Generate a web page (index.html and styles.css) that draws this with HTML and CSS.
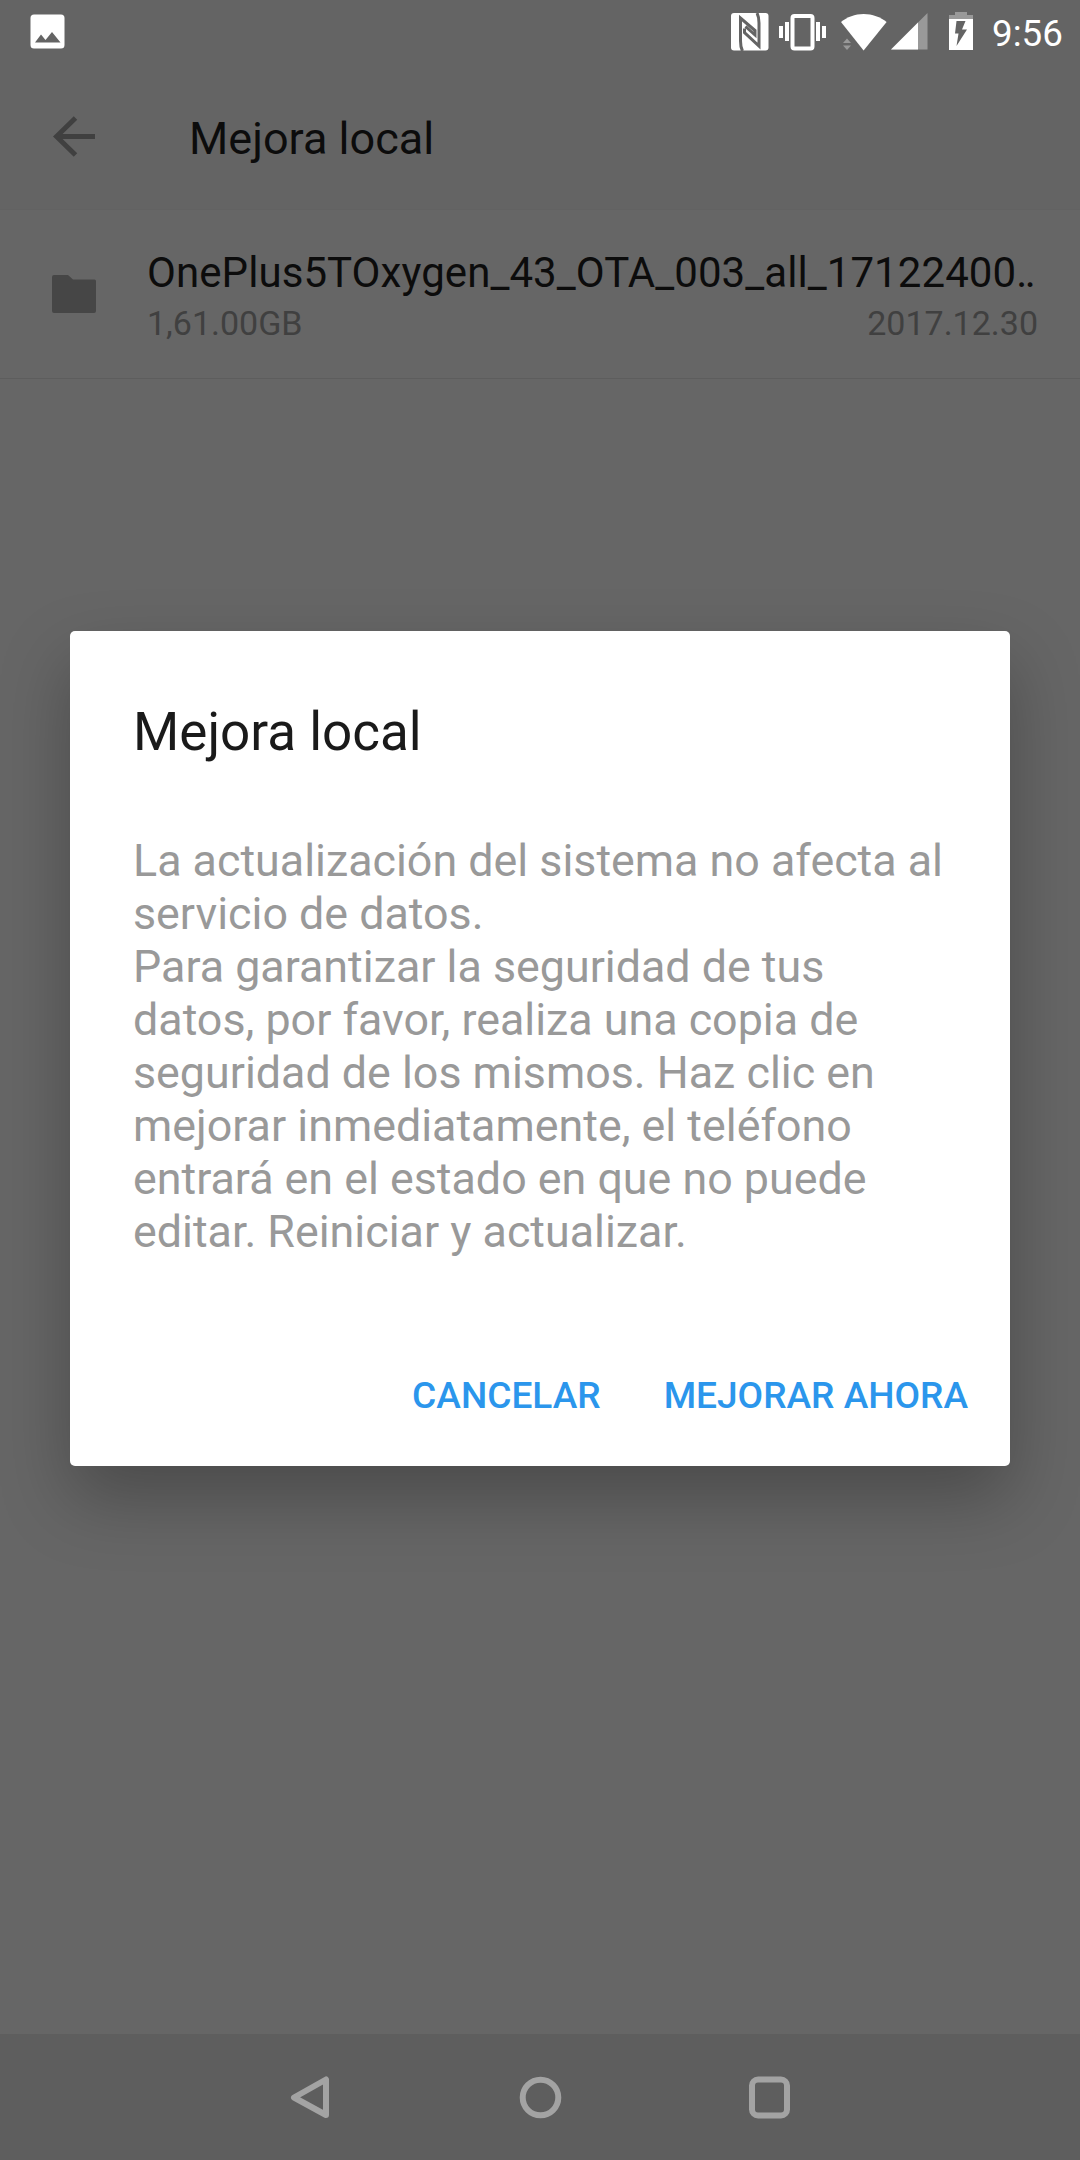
FILE: index.html
```html
<!DOCTYPE html>
<html lang="es">
<head>
    <meta charset="UTF-8">
    <meta name="viewport" content="width=device-width, initial-scale=1.0">
    <title>Mejora local</title>
    <link rel="stylesheet" href="styles.css">
</head>
<body>
    <div class="screen">
        <div class="status-bar">
            <svg class="icon-picture" width="36" height="36" viewBox="0 0 36 36">
                <path fill="#fff" fill-rule="evenodd" d="M4 .5h27A3.500 3.500 0 0 1 34.500 4v27a3.500 3.500 0 0 1-3.500 3.500H4A3.500 3.500 0 0 1 .5 31V4A3.500 3.500 0 0 1 4 .5zM5 28.500h25.500L22 18l-6.500 8-4.500-5.500z"/>
            </svg>
            <div class="status-icons">
                <svg class="icon-nfc" width="38" height="38" viewBox="0 0 38 38">
                    <rect width="37.500" height="37.500" rx="3" fill="#fff"/>
                    <path fill="none" stroke="#646464" stroke-width="3" d="M11.500 38c-1.600-3-2-6-2-10V5L24 17.500v4.500L14.500 13.500M26 0c1.600 3 2 6 2 10v23L13.500 19.500v-4"/>
                </svg>
                <svg class="icon-vibrate" width="48" height="37" viewBox="0 0 48 37">
                    <rect x="13.500" y="2" width="20" height="32.500" rx="2" fill="none" stroke="#fff" stroke-width="4"/>
                    <path fill="#fff" d="M0 12h4v12H0zM6 8h4v19H6zM37 8h4v19h-4zM43 12h4v12h-4z"/>
                </svg>
                <svg class="icon-wifi" width="46" height="37" viewBox="0 0 46 37">
                    <path fill="#fff" d="M22.600 36.500L0 8C6 3 14 0 22.600 0s17 3 23 8z"/>
                    <path fill="#999" d="M2 29l4-4.500 4 4.500zM2 31.500h8L6 36z"/>
                </svg>
                <svg class="icon-signal" width="37" height="37" viewBox="0 0 37 37">
                    <path fill="#999" d="M36.500 0v36.500H0z"/>
                    <path fill="#fff" d="M27 9.500v27H0z"/>
                </svg>
                <svg class="icon-battery" width="24" height="38" viewBox="0 0 24 38">
                    <path fill="#999" d="M0 3h6V0h12v3h6v4H0z"/>
                    <path fill="#fff" d="M0 7h24v31H0z"/>
                    <path fill="#646464" d="M7.500 9h9L13 17.500h5L7.500 34l2-12.500H6z"/>
                </svg>
                <span class="clock">9:56</span>
            </div>
        </div>

        <div class="toolbar">
            <svg class="icon-back" width="42" height="42" viewBox="0 0 42 42">
                <path fill="none" stroke="#404040" stroke-width="5" d="M42 20.500H3M22.500 2L3.500 20.500 22.500 39"/>
            </svg>
            <h1>Mejora local</h1>
        </div>

        <div class="file-row">
            <svg class="icon-folder" width="44" height="38" viewBox="0 0 44 38">
                <path fill="#464646" d="M2 0h14l5 4.500h21.500a1.500 1.500 0 0 1 1.500 1.500v30a2 2 0 0 1-2 2H2a2 2 0 0 1-2-2V2a2 2 0 0 1 2-2z"/>
            </svg>
            <div class="file-info">
                <div class="file-name">OnePlus5TOxygen_43_OTA_003_all_17122400<span class="dots">..</span></div>
                <div class="file-meta">
                    <span>1,61.00GB</span>
                    <span>2017.12.30</span>
                </div>
            </div>
        </div>

        <div class="nav-bar">
            <svg width="44" height="44" viewBox="0 0 44 44">
                <path fill="none" stroke="#a3a3a3" stroke-width="6" stroke-linejoin="round" d="M38 4.500V40L6 22.500z"/>
            </svg>
            <svg width="44" height="44" viewBox="0 0 44 44">
                <circle cx="22.500" cy="22.500" r="17.800" fill="none" stroke="#a3a3a3" stroke-width="6"/>
            </svg>
            <svg width="44" height="44" viewBox="0 0 44 44">
                <rect x="4" y="4.500" width="35" height="36" rx="6" fill="none" stroke="#a3a3a3" stroke-width="6"/>
            </svg>
        </div>
    </div>

    <div class="dialog">
        <h2>Mejora local</h2>
        <p>La actualización del sistema no afecta al servicio de datos.<br>Para garantizar la seguridad de tus datos, por favor, realiza una copia de seguridad de los mismos. Haz clic en mejorar inmediatamente, el teléfono entrará en el estado en que no puede editar. Reiniciar y actualizar.</p>
        <div class="dialog-actions">
            <button>CANCELAR</button>
            <button>MEJORAR AHORA</button>
        </div>
    </div>
</body>
</html>
```
FILE: styles.css
```css
* { margin: 0; padding: 0; box-sizing: border-box; }
:root {
    --bg: #666666; --bar: #646464; --nav: #5e5e5e;
    --text: #0c0c0c; --text-secondary: #404040;
    --accent: #2b96ec;
}
body { width: 1080px; height: 2160px; position: relative; overflow: hidden; font-family: Roboto, sans-serif; }
svg { display: block; flex-shrink: 0; }
.screen { height: 100%; display: flex; flex-direction: column; background: var(--bg); }

.status-bar { height: 63px; padding: 0 17px 0 30px; display: flex; justify-content: space-between; background: var(--bar); }
.icon-picture { margin-top: 14px; }
.status-icons { display: flex; align-items: flex-start; }
.icon-nfc { margin-top: 13px; margin-right: 10px; }
.icon-vibrate { margin-top: 14px; margin-right: 14px; }
.icon-wifi { margin-top: 14px; margin-right: 4px; }
.icon-signal { margin-top: 13px; margin-right: 21px; }
.icon-battery { margin-top: 12px; margin-right: 19px; }
.clock { width: 71px; color: #fff; font-size: 36.75px; line-height: 67px; white-space: nowrap; }

.toolbar { height: 147px; padding: 2px 0 0 53px; display: flex; align-items: center; gap: 94px; background: var(--bar); border-bottom: 1px solid #626262; }
.toolbar h1 { font-size: 45px; font-weight: 400; line-height: 54px; color: var(--text); padding-top: 4px; }

.file-row { height: 169px; padding: 38px 42px 0 52px; display: flex; border-bottom: 1px solid #5d5d5d; }
.icon-folder { margin-top: 27px; margin-right: 51px; }
.file-info { flex: 1; }
.file-name { font-size: 42px; line-height: 50px; letter-spacing: 0.07px; color: var(--text); white-space: nowrap; }
.dots { letter-spacing: -2.5px; }
.file-meta { display: flex; justify-content: space-between; font-size: 34px; line-height: 50px; color: var(--text-secondary); }

.nav-bar { height: 126px; margin-top: auto; padding: 0 288px; display: flex; justify-content: space-between; align-items: center; background: var(--nav); }

.dialog { position: absolute; top: 631px; left: 70px; width: 940px; height: 835px; padding: 70px 42px 0 63px; display: flex; flex-direction: column; background: #fff; border-radius: 5px; box-shadow: 0 32px 70px rgba(0, 0, 0, 0.27); }
.dialog h2 { font-size: 53px; font-weight: 400; line-height: 62px; color: #1a1a1a; }
.dialog p { width: 820px; margin-top: 71px; font-size: 44.8px; line-height: 53px; color: #999; }
.dialog-actions { margin-top: 113px; display: flex; justify-content: flex-end; gap: 63px; }
.dialog-actions button { border: none; background: none; font-family: inherit; font-size: 37.1px; font-weight: 500; line-height: 50px; color: var(--accent); }
```
